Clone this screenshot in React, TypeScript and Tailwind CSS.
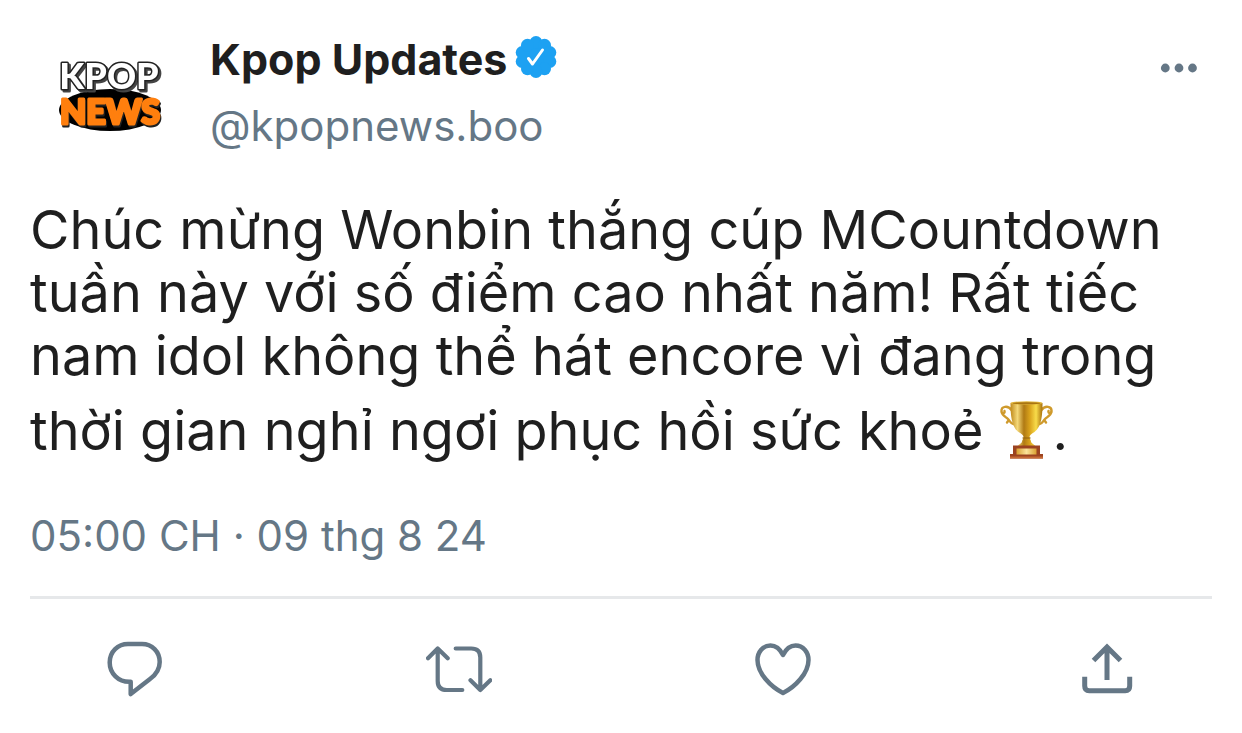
const iconClass = "h-[66px] w-[66px] fill-none stroke-[#657786]";

const scallops = Array.from({ length: 10 }, (_, i) => {
  const angle = (i * Math.PI) / 5;
  return { cx: 21 + 14.5 * Math.sin(angle), cy: 21 - 14.5 * Math.cos(angle) };
});

const Logo = () => {
  return (
    <svg
      viewBox="0 0 156 100"
      className="h-[100px] w-[156px] shrink-0"
      role="img"
      aria-label="Kpop News"
    >
      <ellipse cx="80" cy="66" rx="51" ry="21" fill="#000" />
      <g
        fontFamily="Lato, 'Open Sans', sans-serif"
        fontWeight="900"
        strokeLinejoin="round"
        textAnchor="middle"
      >
        <text
          x="79"
          y="45"
          fontSize="36"
          fill="#fff"
          stroke="#222"
          strokeWidth="3"
          paintOrder="stroke"
          className="drop-shadow-[2px_2px_0_#444]"
        >
          KPOP
        </text>
        <text
          x="80"
          y="80"
          fontSize="34"
          fill="#ff7f0e"
          stroke="#ff7f0e"
          strokeWidth="3"
          className="drop-shadow-[1px_2px_0_#222]"
        >
          NEWS
        </text>
      </g>
    </svg>
  );
};

const Verified = () => {
  return (
    <svg viewBox="0 0 42 42" className="h-[42px] w-[42px]" role="img" aria-label="Verified">
      <g fill="#1da1f2">
        <circle cx="21" cy="21" r="17" />
        {scallops.map(({ cx, cy }, i) => (
          <circle key={i} cx={cx} cy={cy} r="6.500" />
        ))}
      </g>
      <path
        d="M13.500 22.500l4 5.500L27.500 14"
        fill="none"
        stroke="#fff"
        strokeWidth="3"
        strokeLinecap="round"
        strokeLinejoin="round"
      />
    </svg>
  );
};

const Trophy = () => {
  return (
    <svg
      viewBox="0 0 54 60"
      className="mt-[13px] inline-block h-[60px] w-[54px] align-[-10px]"
      role="img"
      aria-label="Trophy"
    >
      <defs>
        <linearGradient id="cup">
          <stop offset="0" stopColor="#c08a1c" />
          <stop offset=".22" stopColor="#f4d878" />
          <stop offset=".42" stopColor="#b07a14" />
          <stop offset=".6" stopColor="#d9a21c" />
          <stop offset=".8" stopColor="#f8dc4a" />
          <stop offset="1" stopColor="#a8700c" />
        </linearGradient>
        <linearGradient id="plate">
          <stop offset="0" stopColor="#d9a030" />
          <stop offset=".5" stopColor="#fbe39a" />
          <stop offset="1" stopColor="#d9a030" />
        </linearGradient>
      </defs>
      <g fill="none" stroke="#cf9a2c" strokeWidth="2.400" strokeLinecap="round">
        <path d="M12.500 10C9 5 2 6 2.500 11.500c.5 4 4 5 7 8 1.500 1.500 2 4 5 4.500M2.500 12c1 2 3.500 1 3-1M9.500 20.500l-1.500 2" />
        <path d="M42.500 10c3.500-5 10.500-4 10 1.500-.5 4-4 5-7 8-1.500 1.500-2 4-5 4.500M52.500 12c-1 2-3.500 1-3-1M45.500 20.500l1.500 2" />
      </g>
      <path
        d="M11.500 3c0 12 1 24 8 29 3 2 5 3 5 5 0 2-1.500 3-1.500 4.500 0 2-4 3-5 5.500h19c-1-2.500-5-3.500-5-5.500 0-1.500-1.500-2.500-1.500-4.500 0-2 2-3 5-5 7-5 8-17 8-29z"
        fill="url(#cup)"
      />
      <ellipse cx="27.500" cy="3" rx="16" ry="1.800" fill="#e4b93e" />
      <ellipse cx="27.500" cy="3.300" rx="14" ry="1" fill="#a87412" />
      <path d="M23.500 38h8" stroke="#9a6810" strokeWidth="1.200" />
      <path d="M14 45.500h27V54h3v4.500H11V54h3z" fill="#9c4320" />
      <path d="M11 56.500h33V58.500H11z" fill="#c66a35" />
      <path d="M17.500 48.500h20V54.500h-20z" fill="url(#plate)" />
    </svg>
  );
};

const App = () => {
  return (
    <article className="bg-white px-[30px] pt-[36px] font-[Inter,'Noto_Sans',sans-serif] text-[#1f1f1f] [font-optical-sizing:none]">
      <header className="flex items-start">
        <div className="pt-[8px]">
          <Logo />
        </div>
        <div className="pl-6">
          <div className="flex items-start gap-2">
            <h1 className="text-[43px] leading-[46px] font-bold">Kpop Updates</h1>
            <Verified />
          </div>
          <a href="#profile" className="mt-[20px] block text-[42px] leading-[48px] text-[#657786]">
            @kpopnews.boo
          </a>
        </div>
        <button type="button" aria-label="More" className="mt-[22px] mr-[14px] ml-auto">
          <svg viewBox="0 0 38 20" className="h-[20px] w-[38px] fill-[#657786]">
            <circle cx="5.300" cy="10" r="4.400" />
            <circle cx="19" cy="10" r="4.400" />
            <circle cx="32.500" cy="10" r="4.400" />
          </svg>
        </button>
      </header>

      <p className="mt-[48px] text-[54px] leading-[63px]">
        Chúc mừng Wonbin thắng cúp MCountdown
        <br />
        tuần này với số điểm cao nhất năm! Rất tiếc
        <br />
        nam idol không thể hát encore vì đang trong
        <br />
        thời gian nghỉ ngơi phục hồi sức khoẻ <Trophy />.
      </p>

      <time dateTime="2024-08-09T17:00" className="mt-[50px] block text-[42px] leading-[48px] text-[#657786]">
        05:00 CH · 09 thg 8 24
      </time>

      <footer className="mt-[36px] flex justify-between border-t-3 border-[#e6e8ea] px-[72px] pt-[38px] pb-[30px]">
        <button type="button" aria-label="Reply">
          <svg viewBox="0 0 66 66" className={iconClass} strokeWidth="4.500" strokeLinejoin="round">
            <path d="M26 7h14C50 7 57.700 14.500 57.700 25c0 7-3.500 12.500-9.700 17L28.700 57V44.800C16 45.500 7.700 36 7.700 25.500 7.700 14.500 16 7 26 7z" />
          </svg>
        </button>
        <button type="button" aria-label="Retweet">
          <svg viewBox="0 0 66 66" className={iconClass} strokeWidth="4.200" strokeLinecap="round" strokeLinejoin="round">
            <path d="M2 21.300L11.700 11.500l10 9.800M11.700 12v32c0 6 3 9 9 9h15.600M29.700 11.500h15.600c6 0 9 3 9 9V53M44.500 43.300l9.800 9.700 10-9.700" />
          </svg>
        </button>
        <button type="button" aria-label="Like">
          <svg viewBox="0 0 66 66" className={iconClass} strokeWidth="4.500" strokeLinejoin="round">
            <path d="M33 18C30 12 26 8.500 20.500 8.500 13 8.500 7.500 15 7.500 23c0 13.500 13.500 27 25.500 33 12-6 25.500-19.500 25.500-33 0-8-5.500-14.500-13-14.500C40 8.500 36 12 33 18z" />
          </svg>
        </button>
        <button type="button" aria-label="Share">
          <svg viewBox="0 0 66 66" className={iconClass} strokeWidth="5">
            <path d="M33 43V11M19.500 23.500L33 10l13.500 13.500M10.700 39.700V49c0 3 1.500 4.700 4.500 4.700h36c3 0 4.500-1.700 4.500-4.700v-9.300" />
          </svg>
        </button>
      </footer>
    </article>
  );
};

export default App;
